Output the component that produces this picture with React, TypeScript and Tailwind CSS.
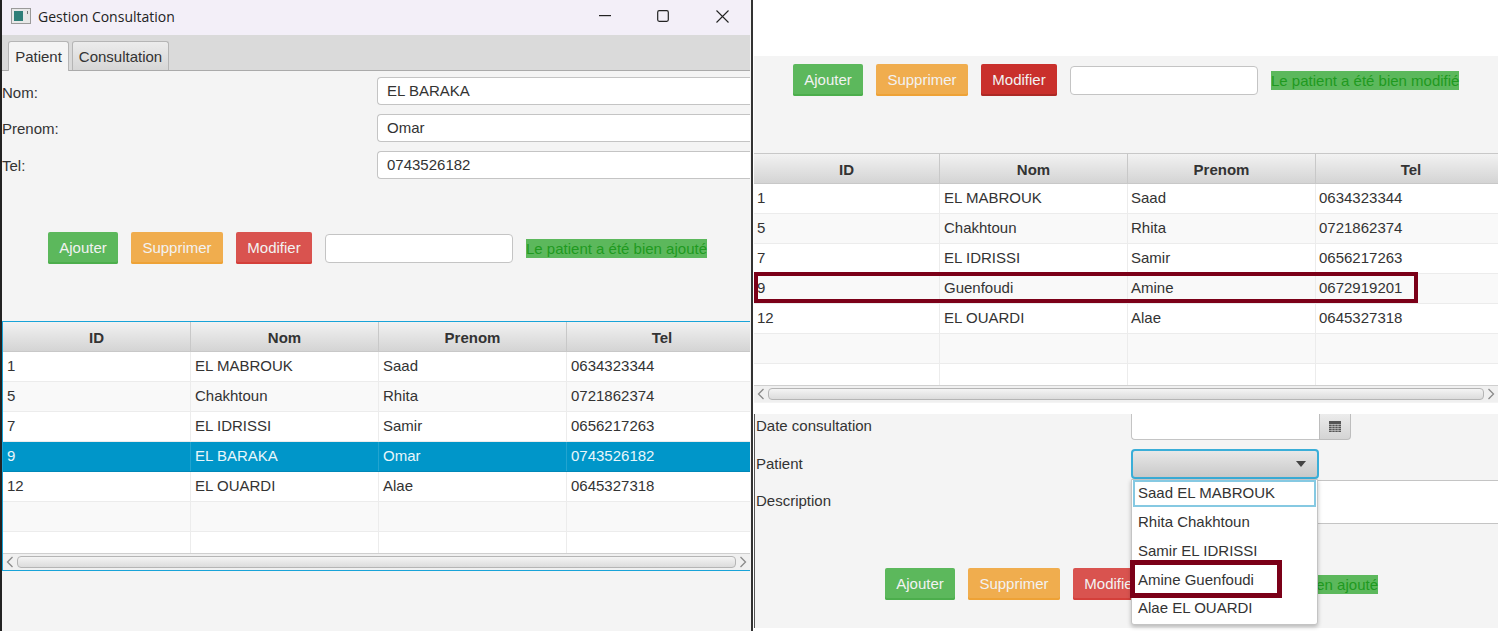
const patientsLeft = [
  ['1', 'EL MABROUK', 'Saad', '0634323344'],
  ['5', 'Chakhtoun', 'Rhita', '0721862374'],
  ['7', 'EL IDRISSI', 'Samir', '0656217263'],
  ['9', 'EL BARAKA', 'Omar', '0743526182'],
  ['12', 'EL OUARDI', 'Alae', '0645327318'],
];

const patientsRight = [
  ['1', 'EL MABROUK', 'Saad', '0634323344'],
  ['5', 'Chakhtoun', 'Rhita', '0721862374'],
  ['7', 'EL IDRISSI', 'Samir', '0656217263'],
  ['9', 'Guenfoudi', 'Amine', '0672919201'],
  ['12', 'EL OUARDI', 'Alae', '0645327318'],
];

const headers = ['ID', 'Nom', 'Prenom', 'Tel'];

function Buttons({ danger }: { danger?: boolean }) {
  const btn = 'h-[32px] rounded-[2px] text-[15px] text-[#f2f2f2] shrink-0 flex items-center justify-center';
  return (
    <>
      <div className={`${btn} w-[70px] bg-[#5cb85c] shadow-[inset_0_-2px_0_#4cae4c]`}>Ajouter</div>
      <div className={`${btn} w-[92px] ml-[13px] bg-[#f0ad4e] shadow-[inset_0_-2px_0_#eea236]`}>Supprimer</div>
      <div
        className={
          danger
            ? `${btn} w-[76px] ml-[13px] bg-[#c9302c] shadow-[inset_0_-2px_0_#ac2925]`
            : `${btn} w-[76px] ml-[13px] bg-[#d9534f] shadow-[inset_0_-2px_0_#d43f3a]`
        }
      >
        Modifier
      </div>
    </>
  );
}

function Message({ text, gap }: { text: string; gap: string }) {
  return <span className={`${gap} h-[19px] leading-[19px] bg-[#5cb85c] text-[#1f9a1f] text-[15px] whitespace-nowrap`}>{text}</span>;
}

function SearchInput() {
  return <div className="ml-[13px] w-[188px] h-[29px] bg-white border border-[#c4c4c4] rounded-[4px] shrink-0" />;
}

function Chevron({ dir }: { dir: 'left' | 'right' }) {
  return (
    <svg width="8" height="12" viewBox="0 0 8 12" fill="none" stroke="#8a8a8a" strokeWidth="1.3" className="shrink-0">
      <path d={dir === 'left' ? 'M6.5 1 L1.5 6 L6.5 11' : 'M1.5 1 L6.5 6 L1.5 11'} />
    </svg>
  );
}

function Table({
  rows,
  selected,
  colsClass,
  focused,
  pads,
}: {
  rows: string[][];
  selected?: number;
  colsClass: string;
  focused?: boolean;
  pads: string[];
}) {
  return (
    <div className={focused ? 'border border-r-0 border-[#18a3d8] bg-white overflow-hidden' : 'border-t border-[#c8c8c8] bg-white overflow-hidden'}>
      <div className={`grid ${colsClass} h-[30px] bg-gradient-to-b from-[#f2f2f2] to-[#d4d4d4] border-b border-[#c8c8c8]`}>
        {headers.map((h) => (
          <div key={h} className="flex items-center justify-center pt-[4px] border-r border-[#c8c8c8] last:border-r-0 font-bold text-[15px] text-[#333]">
            {h}
          </div>
        ))}
      </div>
      {rows.map((row, i) => {
        const isSel = selected === i;
        const bg = isSel ? 'bg-[#0096c9] text-[#e8f6fb]' : i % 2 === 1 ? 'bg-[#f9f9f9] text-[#333]' : 'bg-white text-[#333]';
        return (
          <div key={row[0]} className={`grid ${colsClass} h-[30px] ${bg} border-b ${isSel ? 'border-[#0088b8]' : 'border-[#ececec]'}`}>
            {row.map((c, j) => (
              <div key={j} className={`flex items-center ${pads[j]} text-[15px] border-r last:border-r-0 ${isSel ? 'border-[#22a4d0]' : 'border-[#ececec]'}`}>
                {c}
              </div>
            ))}
          </div>
        );
      })}
      <div className={`grid ${colsClass} h-[30px] bg-[#f9f9f9] border-b border-[#ececec]`}>
        {headers.map((h) => (
          <div key={h} className="border-r border-[#ececec] last:border-r-0" />
        ))}
      </div>
      <div className={`grid ${colsClass} h-[21px] bg-white`}>
        {headers.map((h) => (
          <div key={h} className="border-r border-[#ececec] last:border-r-0" />
        ))}
      </div>
      <div className="h-[17px] flex items-center gap-[3px] px-[3px] bg-[#f0f0f0] border-t border-[#cfcfcf]">
        <Chevron dir="left" />
        <div className="flex-1 h-[12px] rounded-[4px] border border-[#b5b5b5] bg-gradient-to-b from-[#f4f4f4] to-[#dcdcdc]" />
        <Chevron dir="right" />
      </div>
    </div>
  );
}

function Field({ label, value, labelPad }: { label: string; value: string; labelPad: string }) {
  return (
    <div className="flex items-center h-[28px] mb-[9px]">
      <span className={`w-[375px] text-[15px] text-[#333] shrink-0 ${labelPad}`}>{label}</span>
      <div className="flex-1 h-[28px] bg-white border border-[#c4c4c4] border-r-0 rounded-l-[4px] pl-[9px] flex items-center text-[15px] text-[#333]">
        {value}
      </div>
    </div>
  );
}

function LeftWindow() {
  return (
    <div className="w-[751px] h-[631px] shrink-0 border-l-2 border-[#222] pr-[1px] bg-[#f4f4f4] flex flex-col">
      <div className="h-[35px] pb-[3px] bg-[#f3eff8] flex items-center shrink-0">
        <svg width="20" height="16" viewBox="0 0 20 16" className="ml-[9px] shrink-0">
          <rect x="0.5" y="0.5" width="19" height="15" fill="#e8e8e8" stroke="#9a9a9a" />
          <rect x="3" y="3" width="9" height="10" fill="#2f7f78" />
          <rect x="16" y="3" width="1" height="3" fill="#777" />
        </svg>
        <span className="ml-[7px] w-[138px] whitespace-nowrap text-[14px] text-[#222] font-['Open_Sans',sans-serif]">Gestion Consultation</span>
        <svg width="14" height="2" viewBox="0 0 14 2" className="ml-[423px] shrink-0">
          <rect width="12" height="1.2" fill="#222" />
        </svg>
        <svg width="12" height="12" viewBox="0 0 12 12" fill="none" stroke="#222" strokeWidth="1.2" className="ml-[44px] shrink-0">
          <rect x="0.7" y="0.7" width="10.6" height="10.6" rx="1.5" />
        </svg>
        <svg width="13" height="13" viewBox="0 0 13 13" fill="none" stroke="#222" strokeWidth="1.1" className="ml-[47px] shrink-0">
          <path d="M0.5 0.5 L12.5 12.5 M12.5 0.5 L0.5 12.5" />
        </svg>
      </div>
      <div className="h-[36px] bg-[#dadada] border-b border-[#aaa] flex items-end pl-[6px] gap-[3px] shrink-0">
        <div className="w-[61px] h-[30px] pt-[2px] -mb-px bg-[#f4f4f4] border border-b-0 border-[#b5b5b5] rounded-t-[3px] flex items-center justify-center text-[15px] text-[#333]">
          Patient
        </div>
        <div className="w-[97px] h-[29px] pt-[2px] bg-gradient-to-b from-[#ececec] to-[#d6d6d6] border border-b-0 border-[#b5b5b5] rounded-t-[3px] flex items-center justify-center text-[15px] text-[#333]">
          Consultation
        </div>
      </div>
      <div className="pt-[6px]">
        <Field label="Nom:" value="EL BARAKA" labelPad="pt-[5px]" />
        <Field label="Prenom:" value="Omar" labelPad="pt-[2px]" />
        <Field label="Tel:" value="0743526182" labelPad="pt-[2px]" />
      </div>
      <div className="flex items-center pl-[46px] mt-[44px]">
        <Buttons />
        <SearchInput />
        <Message text="Le patient a été bien ajouté" gap="ml-[13px]" />
      </div>
      <div className="mt-[57px]">
        <Table
          rows={patientsLeft}
          selected={3}
          colsClass="grid-cols-[188px_188px_188px_190px]"
          focused
          pads={['pl-[4px]', 'pl-[4px]', 'pl-[4px]', 'pl-[4px]']}
        />
      </div>
    </div>
  );
}

function RightWindow() {
  return (
    <div className="relative w-[749px] shrink-0 h-[631px] pr-[5px] flex flex-col">
      <div className="h-[56px] shrink-0" />
      <div className="h-[347px] bg-[#f4f4f4] shrink-0 flex flex-col">
        <div className="flex items-center pl-[39px] pt-[8px]">
          <Buttons danger />
          <SearchInput />
          <Message text="Le patient a été bien modifié" gap="ml-[13px]" />
        </div>
        <div className="mt-[57px]">
          <Table
            rows={patientsRight}
            colsClass="grid-cols-[186px_188px_188px_190px]"
            pads={['pl-[3px]', 'pl-[4px]', 'pl-[3px]', 'pl-[3px]']}
          />
        </div>
      </div>
      <div className="h-[11px] shrink-0" />
      <div className="relative h-[214px] bg-[#f4f4f4] border-l border-[#555] shrink-0">
        <div className="flex items-center h-[26px]">
          <span className="w-[376px] pl-[1px] pb-[2px] text-[15px] text-[#333] shrink-0">Date consultation</span>
          <div className="w-[188px] h-[26px] bg-white border border-t-0 border-r-0 border-[#c4c4c4] rounded-bl-[4px]" />
          <div className="w-[32px] h-[26px] flex items-center justify-center border border-t-0 border-[#bdbdbd] rounded-br-[4px] bg-gradient-to-b from-[#ececec] to-[#d4d4d4]">
            <svg width="12" height="11" viewBox="0 0 12 11">
              <rect width="12" height="11" fill="#555" />
              <path d="M0 3.5H12M0 5.5H12M0 7.5H12M0 9.5H12M3 3V11M6 3V11M9 3V11" stroke="#d8d8d8" strokeWidth="0.6" />
            </svg>
          </div>
        </div>
        <div className="flex items-center h-[30px] mt-[9px]">
          <span className="w-[376px] pl-[1px] pt-[1px] text-[15px] text-[#333] shrink-0">Patient</span>
          <div className="w-[188px] h-[30px] flex items-center justify-end pr-[11px] rounded-[4px] border-2 border-[#3aaed8] bg-gradient-to-b from-[#e8e8e8] to-[#c9c9c9]">
            <svg width="10" height="6" viewBox="0 0 10 6">
              <path d="M0 0H10L5 6Z" fill="#444" />
            </svg>
          </div>
        </div>
        <div className="flex h-[44px] mt-[1px]">
          <span className="w-[376px] pl-[1px] pt-[10px] text-[15px] text-[#333] shrink-0">Description</span>
          <div className="flex-1 bg-white border-y border-[#c4c4c4]" />
        </div>
        <div className="flex items-center pl-[130px] mt-[44px]">
          <Buttons />
          <Message text="Le patient a été bien ajouté" gap="ml-[48px]" />
        </div>
        {/* popup of the combo */}
        <div className="absolute left-[376px] top-[65px] w-[187px] h-[146px] bg-white border border-[#c4c4c4] rounded-b-[3px] shadow-[0_2px_4px_rgba(0,0,0,0.25)] text-[15px] text-[#333]">
          <div className="h-[27px] mx-px border-2 border-[#86c9e2] pl-[3px] flex items-center">Saad EL MABROUK</div>
          <div className="pt-[1px]">
            {['Rhita Chakhtoun', 'Samir EL IDRISSI', 'Amine Guenfoudi', 'Alae EL OUARDI'].map((n) => (
              <div key={n} className="h-[29px] last:h-[27px] pl-[6px] flex items-center">
                {n}
              </div>
            ))}
          </div>
        </div>
        <div className="absolute left-[375px] top-[146px] w-[152px] h-[38px] border-[5px] border-[#7b0018]" />
      </div>
      <div className="absolute left-0 top-[272px] w-[664px] h-[31px] border-[4px] border-[#7b0018]" />
    </div>
  );
}

export default function App() {
  return (
    <div className="flex w-[1503px] h-[631px] bg-white overflow-hidden font-['Liberation_Sans',Arial,sans-serif]">
      <LeftWindow />
      <div className="w-[2px] bg-[#333] shrink-0" />
      <div className="w-[1px] bg-white shrink-0" />
      <RightWindow />
    </div>
  );
}
